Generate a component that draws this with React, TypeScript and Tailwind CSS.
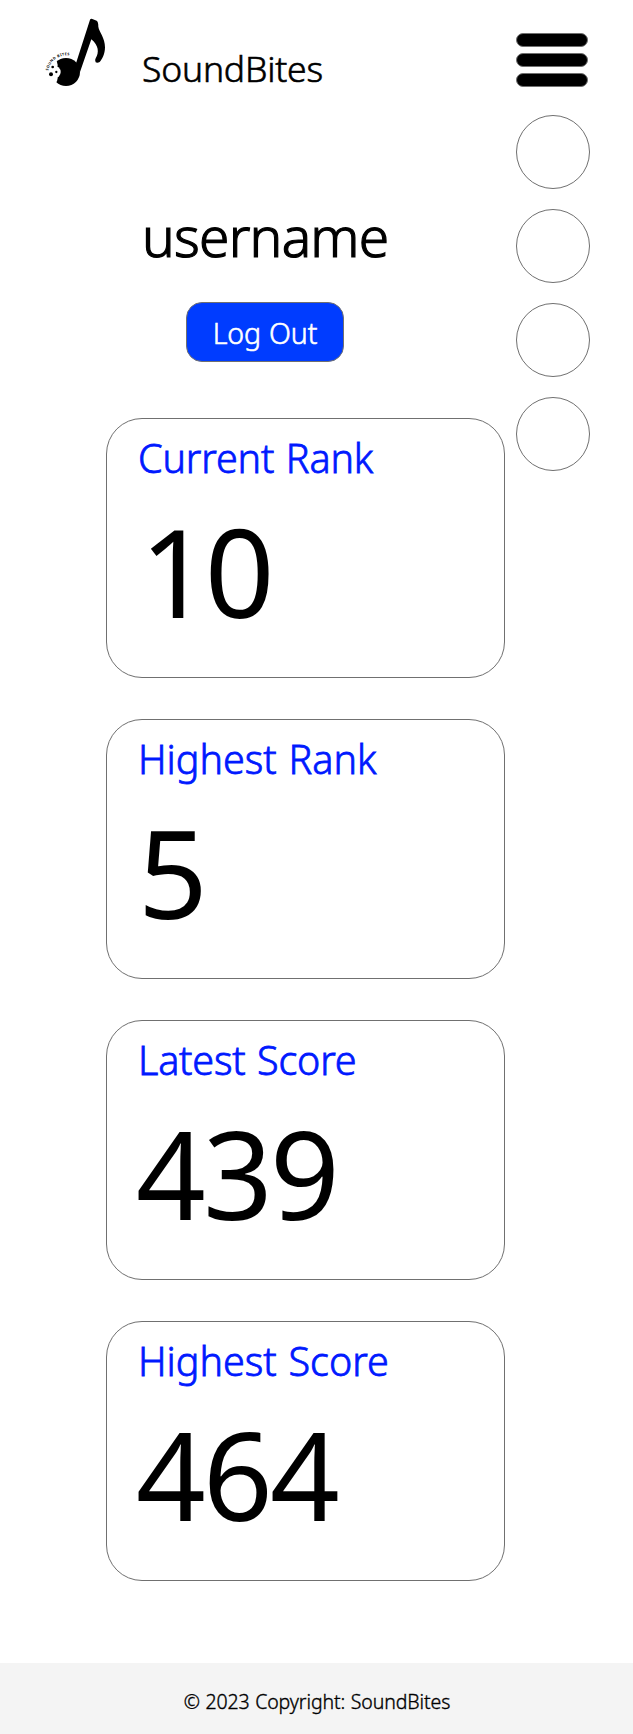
type Stat = { label: string; value: string; labelClass: string; valueClass: string };

const stats: Stat[] = [
  { label: "Current Rank", value: "10", labelClass: "tracking-[-0.15px]", valueClass: "pl-[4px] tracking-[-5px]" },
  { label: "Highest Rank", value: "5", labelClass: "", valueClass: "pl-[2px]" },
  { label: "Latest Score", value: "439", labelClass: "tracking-[-0.2px]", valueClass: "tracking-[-2.8px]" },
  { label: "Highest Score", value: "464", labelClass: "", valueClass: "tracking-[-2.8px]" },
];

function Logo() {
  return (
    <svg viewBox="0 0 300 300" className="size-[100px] shrink-0" role="img">
      <circle cx="108" cy="216" r="42" fill="#000" />
      <path
        d="M138 190 L180 59 Q182 55 187 57 L200 62 Q205 65 205 80 C207 96 225 112 225 142 C225 162 216 179 209 186 Q202 190 197 187 Q193 182 197 175 C208 158 206 136 184 118 L150 216 Z"
        fill="#000"
      />
      <circle cx="62" cy="195" r="21" fill="#fff" />
      <circle cx="73" cy="216" r="19" fill="#fff" />
      <circle cx="62" cy="234" r="21" fill="#fff" />
      <circle cx="63" cy="223" r="6" />
      <circle cx="68" cy="201" r="4" />
      <circle cx="79" cy="216" r="3.5" />
      <path id="arc" d="M55 212 A56 51 0 0 1 130 169" fill="none" />
      <text fontSize="11" className="font-['Noto_Sans',sans-serif] font-bold">
        <textPath href="#arc" textLength="86">SOUND BITES</textPath>
      </text>
    </svg>
  );
}

function StatCard({ label, value, labelClass, valueClass }: Stat) {
  return (
    <section className="h-[260px] w-[399px] rounded-[36px] border border-[#707070] pt-[19px] pl-[31px]">
      <h2 className={`text-[39.5px] leading-[40px] font-light text-[#0019ff] [word-spacing:1.5px] [-webkit-text-stroke:0.8px_#0019ff] ${labelClass}`}>
        {label}
      </h2>
      <p className={`mt-[33px] -ml-[2px] text-[122px] leading-[120px] ${valueClass}`}>{value}</p>
    </section>
  );
}

export default function App() {
  return (
    <div className="flex min-h-[1734px] w-[633px] flex-col bg-white font-['Noto_Sans',sans-serif] text-black">
      <div className="flex flex-1">
        <main className="w-[516px]">
          <header className="flex h-[100px] gap-3 pl-[30px]">
            <Logo />
            <span className="mt-[44px] text-[35.5px] leading-[48px] font-light tracking-[-0.2px] [-webkit-text-stroke:0.6px_#000]">
              SoundBites
            </span>
          </header>
          <h1 className="mt-[104px] ml-[142px] text-[55px] leading-[64px] font-light tracking-[-0.75px] [-webkit-text-stroke:1.2px_#000]">
            username
          </h1>
          <button className="mt-[34px] ml-[186px] block h-[60px] w-[158px] rounded-2xl border border-[#707070] bg-[#003cff] pt-[2px] text-[28.5px] leading-[56px] font-light tracking-[-0.15px] text-white [word-spacing:1px] [-webkit-text-stroke:0.6px_#fff]">
            Log Out
          </button>
          <div className="mt-14 ml-[106px] flex flex-col gap-[41px]">
            {stats.map((s) => (
              <StatCard key={s.label} {...s} />
            ))}
          </div>
        </main>
        <nav className="pt-[33px]">
          <div className="flex flex-col gap-[6px]">
            <span className="h-[14px] w-[72px] rounded-full border border-[#707070] bg-black" />
            <span className="h-[14px] w-[72px] rounded-full border border-[#707070] bg-black" />
            <span className="h-[14px] w-[72px] rounded-full border border-[#707070] bg-black" />
          </div>
          <div className="mt-7 flex flex-col gap-5">
            <span className="size-[74px] rounded-full border border-[#707070]" />
            <span className="size-[74px] rounded-full border border-[#707070]" />
            <span className="size-[74px] rounded-full border border-[#707070]" />
            <span className="size-[74px] rounded-full border border-[#707070]" />
          </div>
        </nav>
      </div>
      <footer className="flex h-[71px] items-center justify-center bg-[#f4f4f4] pt-[6px] pl-px text-[19.5px] leading-[30px] font-light tracking-[-0.1px] [word-spacing:0.6px] [-webkit-text-stroke:0.35px_#000]">
        © 2023 Copyright: SoundBites
      </footer>
    </div>
  );
}
